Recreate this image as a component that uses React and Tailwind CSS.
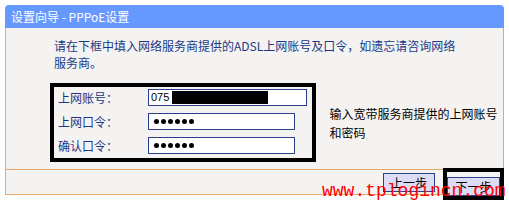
import React from "react";

const cjk = { fontFamily: '"Noto Sans CJK SC", "Liberation Sans", sans-serif' };

function Dots() {
  return (
    <div className="flex items-center gap-[2px] h-full">
      <span className="w-[5px] h-[5px] rounded-full bg-black" />
      <span className="w-[5px] h-[5px] rounded-full bg-black" />
      <span className="w-[5px] h-[5px] rounded-full bg-black" />
      <span className="w-[5px] h-[5px] rounded-full bg-black" />
      <span className="w-[5px] h-[5px] rounded-full bg-black" />
      <span className="w-[5px] h-[5px] rounded-full bg-black" />
    </div>
  );
}

function Row({ label, children }) {
  return (
    <div className="flex items-center h-[17px]">
      <div className="w-[94px] pl-[4px] text-[12px] leading-[17px] text-[#1b3a86]">{label}</div>
      {children}
    </div>
  );
}

export default function App() {
  return (
    <div className="w-[509px] h-[201px] bg-white pt-[5px] pl-[5px] relative overflow-hidden" style={cjk}>
      <div className="w-[499px]">
        <div className="h-[23px] bg-[#6699ff] rounded-t-[4px] flex items-center pl-[6px] text-white text-[12px] whitespace-pre">
          设置向导 - PPPoE设置
        </div>
        <div className="border-x border-b border-[#e6a866] bg-[#f4f3f2]">
          <div className="h-[141px] pl-[48px] pt-[9px]">
            <p className="text-[12px] leading-[17px] text-[#1b3a86] w-[410px]">
              请在下框中填入网络服务商提供的ADSL上网账号及口令，如遗忘请咨询网络服务商。
            </p>
            <div className="flex items-center mt-[12px] -ml-[4px]">
              <div className="w-[268px] h-[79px] border-[4px] border-black flex flex-col gap-[7px] pt-[2px]">
                <Row label="上网账号：">
                  <div className="relative w-[159px] h-[17px] bg-white border border-[#2b3f8c] text-[11px] leading-[15px] pl-[2px] text-black" style={{ fontFamily: '"Liberation Sans", sans-serif' }}>
                    075
                    <span className="absolute left-[23px] top-[1px] w-[96px] h-[13px] bg-black" />
                  </div>
                </Row>
                <Row label="上网口令：">
                  <div className="w-[147px] h-[17px] bg-white border border-[#2b3f8c] pl-[5px]">
                    <Dots />
                  </div>
                </Row>
                <Row label="确认口令：">
                  <div className="w-[147px] h-[17px] bg-white border border-[#2b3f8c] pl-[5px]">
                    <Dots />
                  </div>
                </Row>
              </div>
              <div className="ml-[14px] text-[12px] leading-[19px] text-black w-[175px]">
                输入宽带服务商提供的上网账号和密码
              </div>
            </div>
          </div>
          <div className="h-[25px] border-t border-[#e6a866] flex justify-end items-start gap-[12px] pr-[3px] pt-[3px]">
            <button className="w-[52px] h-[19px] bg-[#dcdcf6] border border-[#2b3f8c] text-[12px] leading-[17px] text-black">
              上一步
            </button>
            <div className="relative">
              <span className="absolute -left-[4px] -top-[5px] -right-[4px] -bottom-[3px] border-[4px] border-black" />
              <button className="relative w-[53px] h-[19px] bg-[#dcdcf6] border border-[#2b3f8c] text-[12px] leading-[17px] text-black">
                下一步
              </button>
            </div>
          </div>
        </div>
      </div>
      <div
        className="absolute left-[322px] top-[181px] text-[18px] leading-[20px] text-[#ff0000] whitespace-nowrap"
        style={{ fontFamily: '"Liberation Mono", monospace' }}
      >
        www.tplogincn.com
      </div>
    </div>
  );
}
